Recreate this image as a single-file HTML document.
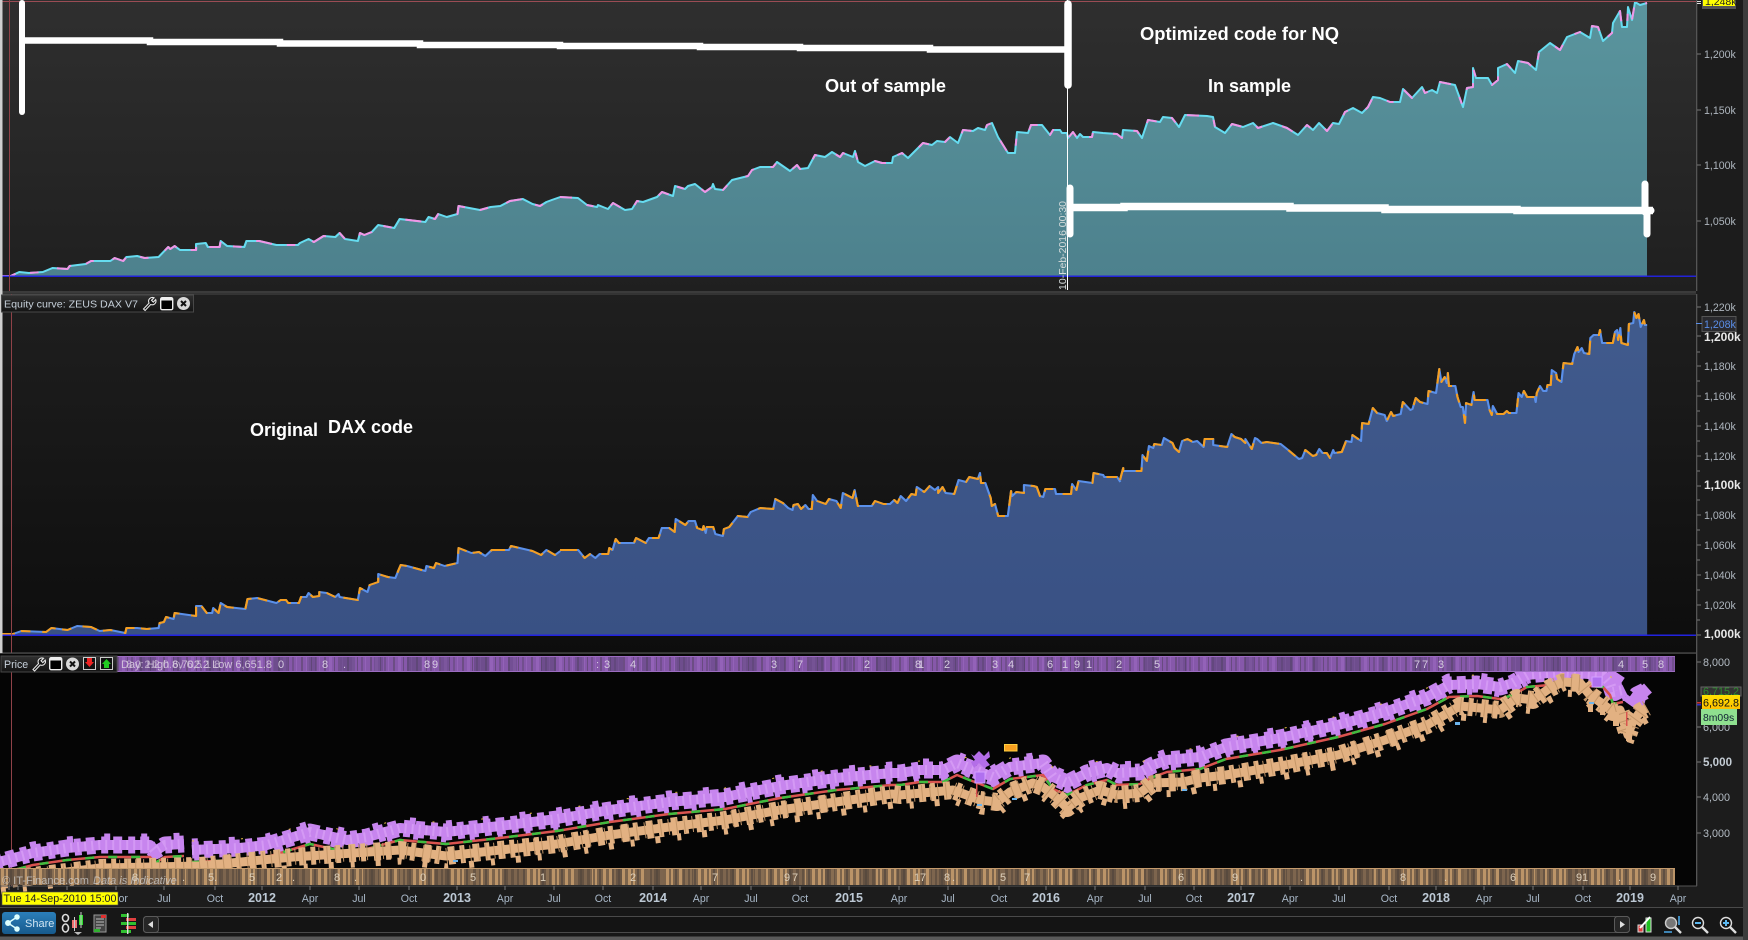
<!DOCTYPE html>
<html><head><meta charset="utf-8"><title>Equity curve</title>
<style>html,body{margin:0;padding:0;background:#1c1c1c;width:1748px;height:940px;overflow:hidden}svg{display:block}text{font-family:"Liberation Sans",Arial,sans-serif}</style></head>
<body>
<svg width="1748" height="940" viewBox="0 0 1748 940" xmlns="http://www.w3.org/2000/svg">
<defs>
<linearGradient id="b1" x1="0" y1="0" x2="0" y2="1"><stop offset="0" stop-color="#2f2f2f"/><stop offset="1" stop-color="#1f1f1f"/></linearGradient>
<linearGradient id="b2" x1="0" y1="0" x2="0" y2="1"><stop offset="0" stop-color="#1f1f1f"/><stop offset="1" stop-color="#0d0d0d"/></linearGradient>
<linearGradient id="f1" gradientUnits="userSpaceOnUse" x1="0" y1="0" x2="0" y2="276"><stop offset="0" stop-color="#5a959e"/><stop offset="1" stop-color="#4d818d"/></linearGradient>
<linearGradient id="f2" gradientUnits="userSpaceOnUse" x1="0" y1="300" x2="0" y2="635"><stop offset="0" stop-color="#415b8d"/><stop offset="1" stop-color="#395184"/></linearGradient>
<linearGradient id="lg" x1="0" y1="0" x2="0" y2="1"><stop offset="0" stop-color="#303030"/><stop offset="1" stop-color="#141414"/></linearGradient>
<linearGradient id="sh" x1="0" y1="0" x2="0" y2="1"><stop offset="0" stop-color="#2b7fba"/><stop offset="1" stop-color="#175a8c"/></linearGradient>
<linearGradient id="yo" x1="0" y1="0" x2="0" y2="1"><stop offset="0" stop-color="#ffe000"/><stop offset="1" stop-color="#ffc000"/></linearGradient>
<pattern id="pp" width="23" height="20" patternUnits="userSpaceOnUse"><rect width="23" height="20" fill="#8658aa"/><rect x="2" width="2" height="20" fill="#6c4d84"/><rect x="7" width="3" height="20" fill="#9362b8"/><rect x="12" width="1" height="20" fill="#684a80"/><rect x="16" width="2" height="20" fill="#724f8e"/><rect x="20" width="1" height="20" fill="#9362b8"/></pattern>
<pattern id="pd" width="67" height="20" patternUnits="userSpaceOnUse"><rect x="5" width="15" height="20" fill="#50406a" fill-opacity=".45"/><rect x="39" width="9" height="20" fill="#50406a" fill-opacity=".35"/></pattern>
<pattern id="tp" width="19" height="20" patternUnits="userSpaceOnUse"><rect width="19" height="20" fill="#7c644c"/><rect x="1" width="3" height="20" fill="#bb9468"/><rect x="6" width="2" height="20" fill="#bb9468"/><rect x="10" width="2" height="20" fill="#5f4f42"/><rect x="14" width="3" height="20" fill="#bb9468"/></pattern>
<pattern id="td" width="71" height="20" patternUnits="userSpaceOnUse"><rect x="8" width="16" height="20" fill="#54463c" fill-opacity=".6"/><rect x="44" width="10" height="20" fill="#54463c" fill-opacity=".5"/></pattern>

<path id="c1a" fill="none" d="M0,276 10,276 18,272 27,273 40,272 49,268 63,269 65,266 80,264 85,261 103,261 107,258 115,261 118,257 128,256 135,258 148,257 157,247 159,249 163,246 168,250 183,250 183,244 192,243 194,247 205,247 206,241 212,246 228,247 230,241 242,241 258,245 278,245 280,243 288,239 293,242 302,236 313,237 317,233 322,239 334,241 336,233 340,235 347,232 353,225 368,228 373,219 397,222 400,217 406,219 409,214 417,217 427,214 428,206 448,210 458,207 467,206 476,201 488,199 497,204 504,206 510,202 515,200 523,197"/>
<path id="c1b" fill="none" d="M560,197 578,198 587,205 597,207 598,205 608,209 613,203 625,210 632,209 637,201 643,202 657,197 662,192 673,196 675,186 685,189 688,186 695,184 705,192 712,187 713,184 715,189 723,190 732,180 748,176 752,170 760,167 773,167 777,162 790,171 797,165 800,169 808,168 815,155 825,157 832,152 840,157 843,153 853,157 855,151 858,162 865,166 875,161 882,163 892,163 893,157 902,153 908,158 923,143 932,145 937,141 945,142 950,137 958,143 963,130 973,131 978,128 985,130 987,125 992,123 998,137 1008,153 1015,153 1017,132 1028,133 1031,125 1042,125 1050,135 1053,130 1060,130 1062,133 1067,133 1068,138 1073,132 1077,138 1080,134 1083,137 1092,137 1093,132 1103,133 1117,134 1122,138 1123,130 1137,131 1142,138 1148,120 1160,122 1163,117 1172,118 1179,127 1185,115 1207,116 1213,117 1215,127 1225,133 1232,124 1243,127 1253,123 1258,128 1273,123 1287,128 1298,135 1307,125 1313,130 1319,123 1327,131 1333,123 1339,124 1345,112 1353,108 1362,113 1368,107 1373,97 1380,98 1390,102 1400,102 1403,89 1412,98 1422,87 1425,93 1432,90 1437,93 1440,82 1455,85 1463,107 1467,88 1473,87 1473,68 1476,78 1488,78 1492,85 1498,80 1498,68 1507,64 1515,73 1518,61 1528,63 1536,70 1539,52 1550,43 1560,50 1567,37 1580,32 1590,38 1592,26 1598,27 1603,41 1612,33 1613,23 1620,11 1622,27 1627,27 1628,7 1632,20 1635,2 1640,5 1647,3"/>
<path id="c2a" fill="none" d="M0,634 12,634 20,631 43,632 48,628 63,630 72,626 85,627 93,631 103,630 117,633 118,628 128,628 137,629 148,628 149,623 153,622 155,617 162,619 163,613 183,616 183,606 188,606 193,613 198,613 199,608 204,613 206,603 212,607 229,609 231,599 240,598 258,603 262,600 267,600 269,603 279,603 281,597 286,597 288,593 292,597 298,596 298,592 305,593 313,597 316,594 317,597 334,600 336,588 343,592 345,585 353,582 353,574 362,577 369,578 372,570 374,565 380,566 397,571 398,566 405,568 407,563 415,566 427,563 428,548 440,553 447,552 453,556 459,550 475,550 477,546 497,551 505,555 510,550 518,555 523,551"/>
<path id="c2b" fill="none" d="M560,550 577,550 583,558 588,554 593,558 597,554 605,554 606,548 609,550 612,539 615,543 629,543 631,538 640,543 643,538 652,538 655,528 662,528 667,532 668,519 677,525 680,521 686,521 688,528 693,530 694,526 696,533 697,527 703,527 705,534 712,536 713,529 718,527 726,516 735,517 738,512 747,508 759,509 761,499 768,503 773,508 777,510 778,505 782,504 785,509 789,505 792,509 795,509 796,495 800,501 808,504 811,499 818,501 822,508 824,493 833,498 835,490 838,506 851,506 854,501 862,504 868,504 872,500 875,503 878,496 883,501 888,494 892,495 893,487 900,492 905,486 910,490 913,487 913,493 917,487 920,493 928,494 932,480 939,482 942,477 950,479 952,473 953,483 957,483 962,498 963,506 966,504 969,516 978,516 981,491 982,496 986,492 993,493 993,485 1002,486 1005,487 1008,496 1011,497 1013,489 1022,489 1023,494 1037,494 1038,484 1042,490 1044,481 1057,483 1058,473 1067,475 1068,477 1080,477 1083,482"/>
<path id="c2c" fill="none" d="M1120,480 1123,468 1123,471 1140,471 1141,455 1145,461 1147,446 1151,448 1152,444 1159,445 1161,438 1169,443 1171,448 1175,452 1178,441 1183,439 1188,442 1192,441 1198,447 1199,439 1207,439 1207,445 1220,447 1224,434 1227,437 1233,439 1237,443 1237,439 1243,449 1246,438 1248,439 1252,443 1257,442 1270,444 1277,450 1287,459 1290,458 1293,450 1300,456 1303,455 1306,449 1309,453 1313,453 1316,458 1319,450 1320,453 1327,452 1331,441 1336,442 1337,435 1345,441 1346,423 1352,424 1356,408 1360,413 1367,415 1369,421 1373,412 1375,416 1382,414 1384,402 1391,410 1393,409 1396,398 1400,402 1407,404 1408,391 1415,393 1418,369 1420,382 1423,377 1425,383 1426,373 1427,386 1433,386 1435,397 1438,407 1440,407 1442,423 1443,403 1448,405 1450,392 1451,400 1463,400 1465,410 1467,415 1468,406 1472,414 1478,414 1481,411 1483,413 1490,413 1492,393 1495,397 1497,391 1500,397 1507,397 1508,402 1509,393 1512,386 1515,391 1518,391 1519,385 1522,385 1523,370 1527,373 1528,379 1532,382 1534,363 1542,364 1544,354 1547,347 1548,352 1551,348 1553,353 1558,354 1559,338 1562,335 1567,335 1568,330 1570,343 1580,343 1582,332 1584,330 1585,340 1587,328 1588,343 1594,345 1595,324 1599,323 1600,312 1602,318 1604,314 1606,327 1609,320 1610,325 1612,325"/>

<path id="pu1" fill="none" d="M-5,863 33,853 67,848 100,845 150,845 155,851 165,845 184,844"/>
<path id="pu2" fill="none" d="M192,850 240,848 267,845 310,832 347,840 367,837 400,828 446,832 500,826 557,819 610,810 669,802 725,797 780,786 836,778 892,773 900,773 920,770 943,770 957,763 967,767 993,777 1010,767 1043,763 1053,777 1067,783 1087,773 1107,768 1117,773 1140,772 1153,765 1167,760 1200,757 1226,747 1280,738 1338,725 1385,712 1427,697 1449,685 1477,684 1500,687 1513,683 1527,675 1560,672 1603,675 1610,683 1613,692 1623,690"/>
<path id="pu3" fill="none" d="M1630,705 1637,695 1647,690"/>
<path id="ta" fill="none" d="M0,880 100,868 200,866 293,857 400,850 446,856 500,850 557,844 610,835 669,827 725,820 780,810 836,802 892,794 900,795 933,792 953,790 980,800 997,802 1010,792 1033,783 1043,787 1057,798 1067,808 1080,798 1100,790 1117,795 1140,793 1153,783 1183,782 1200,778 1226,775 1280,766 1338,755 1385,740 1427,725 1460,706 1500,710 1517,698 1533,700 1550,688 1563,682 1580,683 1590,695 1600,702 1613,712 1620,710 1628,735 1632,723 1640,712 1647,708"/>

<g id="wrench"><path d="M1,12.5 L6.6,6.6 A3.8,3.8 0 0 1 11.5,1.3 L9,3.8 L10.8,5.6 L13.2,3.1 A3.8,3.8 0 0 1 8.2,8 L2.6,14 Z" fill="#111" stroke="#e8e8e8" stroke-width="1.1"/></g>
<g id="win"><rect x=".7" y=".7" width="12" height="12" rx="1.5" fill="#000" stroke="#eee" stroke-width="1.4"/><rect x="1" y="1" width="11.5" height="2.5" fill="#eee"/></g>
<g id="cls"><circle cx="6.5" cy="6.5" r="6.5" fill="#d8d8d8"/><path d="M4,4 L9,9 M9,4 L4,9" stroke="#111" stroke-width="2"/></g>
</defs>

<!-- panel 1 -->
<rect x="0" y="0" width="1696" height="291" fill="url(#b1)"/>
<g><path d="M0,276 10,276 18,272 27,273 40,272 49,268 63,269 65,266 80,264 85,261 103,261 107,258 115,261 118,257 128,256 135,258 148,257 157,247 159,249 163,246 168,250 183,250 183,244 192,243 194,247 205,247 206,241 212,246 228,247 230,241 242,241 258,245 278,245 280,243 288,239 293,242 302,236 313,237 317,233 322,239 334,241 336,233 340,235 347,232 353,225 368,228 373,219 397,222 400,217 406,219 409,214 417,217 427,214 428,206 448,210 458,207 467,206 476,201 488,199 497,204 504,206 510,202 515,200 523,197 523,276Z" fill="url(#f1)" transform="scale(1.0714 1)"/>
<path d="M560,197 578,198 587,205 597,207 598,205 608,209 613,203 625,210 632,209 637,201 643,202 657,197 662,192 673,196 675,186 685,189 688,186 695,184 705,192 712,187 713,184 715,189 723,190 732,180 748,176 752,170 760,167 773,167 777,162 790,171 797,165 800,169 808,168 815,155 825,157 832,152 840,157 843,153 853,157 855,151 858,162 865,166 875,161 882,163 892,163 893,157 902,153 908,158 923,143 932,145 937,141 945,142 950,137 958,143 963,130 973,131 978,128 985,130 987,125 992,123 998,137 1008,153 1015,153 1017,132 1028,133 1031,125 1042,125 1050,135 1053,130 1060,130 1062,133 1067,133 1068,138 1073,132 1077,138 1080,134 1083,137 1092,137 1093,132 1103,133 1117,134 1122,138 1123,130 1137,131 1142,138 1148,120 1160,122 1163,117 1172,118 1179,127 1185,115 1207,116 1213,117 1215,127 1225,133 1232,124 1243,127 1253,123 1258,128 1273,123 1287,128 1298,135 1307,125 1313,130 1319,123 1327,131 1333,123 1339,124 1345,112 1353,108 1362,113 1368,107 1373,97 1380,98 1390,102 1400,102 1403,89 1412,98 1422,87 1425,93 1432,90 1437,93 1440,82 1455,85 1463,107 1467,88 1473,87 1473,68 1476,78 1488,78 1492,85 1498,80 1498,68 1507,64 1515,73 1518,61 1528,63 1536,70 1539,52 1550,43 1560,50 1567,37 1580,32 1590,38 1592,26 1598,27 1603,41 1612,33 1613,23 1620,11 1622,27 1627,27 1628,7 1632,20 1635,2 1640,5 1647,3 1647,276 560,276Z" fill="url(#f1)"/></g>
<g stroke-width="2" stroke-linejoin="round">
<use href="#c1a" stroke="#66dcf0" transform="scale(1.0714 1)"/><use href="#c1a" stroke="#f195e6" stroke-dasharray="15 14 8 18" transform="scale(1.0714 1)"/>
<use href="#c1b" stroke="#66dcf0"/><use href="#c1b" stroke="#f195e6" stroke-dasharray="12 17 7 21"/>
</g>
<rect x="0" y="275.5" width="1696" height="1.5" fill="#2222d8"/>
<rect x="0" y="1" width="1696" height="1" fill="#9a4c54"/>
<rect x="9" y="0" width="1" height="291" fill="#8f4248"/>
<rect x="1067" y="0" width="1" height="290" fill="#fff"/>
<text transform="translate(1066 290) rotate(-90)" font-size="10.5" fill="#d6dcdc" textLength="89" lengthAdjust="spacingAndGlyphs">10-Feb-2016 00:30</text>
<rect x="0" y="291.5" width="1696" height="1" fill="#5a5a5a"/>

<!-- panel 2 -->
<rect x="0" y="294" width="1696" height="359" fill="url(#b2)"/>
<rect x="0" y="293.5" width="1696" height="1" fill="#4a4a4a"/>
<path d="M0,635 0,634 12,634 20,631 43,632 48,628 63,630 72,626 85,627 93,631 103,630 117,633 118,628 128,628 137,629 148,628 149,623 153,622 155,617 162,619 163,613 183,616 183,606 188,606 193,613 198,613 199,608 204,613 206,603 212,607 229,609 231,599 240,598 258,603 262,600 267,600 269,603 279,603 281,597 286,597 288,593 292,597 298,596 298,592 305,593 313,597 316,594 317,597 334,600 336,588 343,592 345,585 353,582 353,574 362,577 369,578 372,570 374,565 380,566 397,571 398,566 405,568 407,563 415,566 427,563 428,548 440,553 447,552 453,556 459,550 475,550 477,546 497,551 505,555 510,550 518,555 523,551 523,635Z" fill="url(#f2)" transform="scale(1.0714 1)"/>
<path d="M560,635 560,550 577,550 583,558 588,554 593,558 597,554 605,554 606,548 609,550 612,539 615,543 629,543 631,538 640,543 643,538 652,538 655,528 662,528 667,532 668,519 677,525 680,521 686,521 688,528 693,530 694,526 696,533 697,527 703,527 705,534 712,536 713,529 718,527 726,516 735,517 738,512 747,508 759,509 761,499 768,503 773,508 777,510 778,505 782,504 785,509 789,505 792,509 795,509 796,495 800,501 808,504 811,499 818,501 822,508 824,493 833,498 835,490 838,506 851,506 854,501 862,504 868,504 872,500 875,503 878,496 883,501 888,494 892,495 893,487 900,492 905,486 910,490 913,487 913,493 917,487 920,493 928,494 932,480 939,482 942,477 950,479 952,473 953,483 957,483 962,498 963,506 966,504 969,516 978,516 981,491 982,496 986,492 993,493 993,485 1002,486 1005,487 1008,496 1011,497 1013,489 1022,489 1023,494 1037,494 1038,484 1042,490 1044,481 1057,483 1058,473 1067,475 1068,477 1080,477 1083,482 1083,635Z" fill="url(#f2)" transform="translate(560 0) scale(1.0714 1) translate(-560 0)"/>
<path d="M1120,635 1120,480 1123,468 1123,471 1140,471 1141,455 1145,461 1147,446 1151,448 1152,444 1159,445 1161,438 1169,443 1171,448 1175,452 1178,441 1183,439 1188,442 1192,441 1198,447 1199,439 1207,439 1207,445 1220,447 1224,434 1227,437 1233,439 1237,443 1237,439 1243,449 1246,438 1248,439 1252,443 1257,442 1270,444 1277,450 1287,459 1290,458 1293,450 1300,456 1303,455 1306,449 1309,453 1313,453 1316,458 1319,450 1320,453 1327,452 1331,441 1336,442 1337,435 1345,441 1346,423 1352,424 1356,408 1360,413 1367,415 1369,421 1373,412 1375,416 1382,414 1384,402 1391,410 1393,409 1396,398 1400,402 1407,404 1408,391 1415,393 1418,369 1420,382 1423,377 1425,383 1426,373 1427,386 1433,386 1435,397 1438,407 1440,407 1442,423 1443,403 1448,405 1450,392 1451,400 1463,400 1465,410 1467,415 1468,406 1472,414 1478,414 1481,411 1483,413 1490,413 1492,393 1495,397 1497,391 1500,397 1507,397 1508,402 1509,393 1512,386 1515,391 1518,391 1519,385 1522,385 1523,370 1527,373 1528,379 1532,382 1534,363 1542,364 1544,354 1547,347 1548,352 1551,348 1553,353 1558,354 1559,338 1562,335 1567,335 1568,330 1570,343 1580,343 1582,332 1584,330 1585,340 1587,328 1588,343 1594,345 1595,324 1599,323 1600,312 1602,318 1604,314 1606,327 1609,320 1610,325 1612,325 1612,635Z" fill="url(#f2)" transform="translate(1120 0) scale(1.0714 1) translate(-1120 0)"/>
<g stroke-width="2" stroke-linejoin="round">
<use href="#c2a" stroke="#5a90ea" transform="scale(1.0714 1)"/><use href="#c2a" stroke="#f59e20" stroke-dasharray="14 6 9 11"  transform="scale(1.0714 1)"/>
<g transform="translate(560 0) scale(1.0714 1) translate(-560 0)"><use href="#c2b" stroke="#5a90ea"/><use href="#c2b" stroke="#f59e20" stroke-dasharray="16 8 10 13"/></g>
<g transform="translate(1120 0) scale(1.0714 1) translate(-1120 0)"><use href="#c2c" stroke="#5a90ea"/><use href="#c2c" stroke="#f59e20" stroke-dasharray="16 11 9 14"/></g>
</g>
<rect x="0" y="634.5" width="1696" height="1.5" fill="#2222e0"/>
<rect x="11" y="294" width="1" height="359" fill="#8f4248"/>
<rect x="0" y="652.5" width="1696" height="1" fill="#5a5a5a"/>

<!-- left strip -->
<rect x="0" y="0" width="2.5" height="653" fill="#cfcfcf"/>

<!-- panel 3 -->
<rect x="0" y="654" width="1696" height="232" fill="#050505"/>
<rect x="11" y="672" width="1" height="214" fill="#8f4248"/>
<g stroke-linejoin="round" fill="none">
<g stroke="#c785ee" stroke-width="10"><use href="#pu1"/><use href="#pu2"/><use href="#pu3"/></g>
<g stroke="#c785ee" stroke-width="17" stroke-dasharray="7 5 9 6"><use href="#pu1"/><use href="#pu2"/><use href="#pu3"/></g>
<g stroke="#c785ee" stroke-width="13" stroke-dasharray="5 23" transform="translate(2 4)"><use href="#pu2"/></g>
<g stroke="#c785ee" stroke-width="13" stroke-dasharray="6 31" transform="translate(0 -5)"><use href="#pu1"/><use href="#pu2"/></g>
<path d="M1605,678 1615,695 1625,690M1632,706 1640,695 1648,688" stroke="#c785ee" stroke-width="12"/>
<path d="M1610,674 1622,682M1637,700 1645,702" stroke="#c785ee" stroke-width="10"/>
<g stroke="#dca6f8" stroke-width="10" stroke-dasharray="2 5" opacity=".6"><use href="#pu1"/><use href="#pu2"/></g>
<g stroke="#e8c040" stroke-width="1" transform="translate(0 -9)" stroke-dasharray="2 47"><use href="#pu2"/></g>
<g transform="translate(0 12)"><use href="#pu1" stroke="#d9534f" stroke-width="2.5"/><use href="#pu2" stroke="#d9534f" stroke-width="2.5"/><use href="#pu1" stroke="#3ebc3e" stroke-width="2.5" stroke-dasharray="9 14"/><use href="#pu2" stroke="#3ebc3e" stroke-width="2.5" stroke-dasharray="9 14"/></g>
<use href="#ta" stroke="#e2b182" stroke-width="9"/>
<use href="#ta" stroke="#e2b182" stroke-width="18" stroke-dasharray="7 5 5 8"/>
<use href="#ta" stroke="#e2b182" stroke-width="7" stroke-dasharray="5 17 4 21" transform="translate(1 11)"/>
<use href="#ta" stroke="#c49668" stroke-width="16" stroke-dasharray="1 7"/>
</g>
<g fill="#e2b182"><rect x="1626" y="722" width="6" height="19"/><rect x="1613" y="712" width="6" height="14"/><rect x="1588" y="700" width="5" height="12"/><rect x="1600" y="705" width="5" height="10"/><rect x="1064" y="806" width="5" height="9"/><rect x="995" y="800" width="5" height="10"/></g>
<g fill="#d9534f"><rect x="1626" y="712" width="1.5" height="14"/><rect x="976" y="783" width="1.5" height="14"/></g>
<g fill="#6db4ec"><rect x="1455" y="722" width="5" height="3"/><rect x="1589" y="702" width="5" height="2"/><rect x="1012" y="798" width="5" height="2"/><rect x="977" y="804" width="5" height="2"/><rect x="1182" y="789" width="5" height="2"/><rect x="453" y="860" width="5" height="2"/></g>
<rect x="1004.5" y="744.5" width="12.5" height="6.5" fill="#f8a020" stroke="#ffd040"/>
<path d="M974,756 979,751 984,756 989,751 990,757 986,760 990,765 984,768 979,763 974,768 971,762 975,760 971,754Z" fill="#b46ee8"/>
<rect x="975" y="772" width="10" height="11" fill="#b070f0" stroke="#d4a0ff"/>
<rect x="1592" y="677" width="10" height="10" fill="#b070f0" stroke="#d4a0ff"/>

<!-- top band -->
<rect x="117" y="656" width="1558" height="16" fill="url(#pp)"/>
<rect x="117" y="656" width="1558" height="16" fill="url(#pd)"/>
<rect x="117" y="656" width="1558" height="1" fill="#9b6cc0"/>
<rect x="117" y="671" width="1558" height="1" fill="#9b6cc0"/>
<text y="668" font-size="11" fill="#d6cce0" x="278 322 343 424 432 596 604 630 771 797 864 915 918 944 992 1008 1047 1062 1074 1086 1116 1139 1154 1414 1422 1438 1618 1642 1658">08.89:343728123461912 5773458</text>

<!-- tan band -->
<rect x="0" y="868" width="1675" height="17" fill="url(#tp)"/>
<rect x="0" y="868" width="1675" height="17" fill="url(#td)"/>
<rect x="0" y="868" width="1675" height="1" fill="#c49a6c"/>
<text y="881" font-size="11" fill="#dccfba" x="132 182 208 214 249 276 292 334 354 420 470 540 630 712 784 792 914 920 944 952 1000 1024 1178 1232 1300 1400 1444 1510 1576 1582 1618 1650">8.5.52.8.0512797178.5769.8.691.9</text>
<text x="2" y="884" font-size="11" fill="#d0d0d0" fill-opacity=".75">© IT-Finance.com</text>
<text x="93" y="884" font-size="11" font-style="italic" fill="#d0d0d0" fill-opacity=".75">Data is Indicative</text>

<!-- right axis -->
<rect x="1696" y="0" width="1.3" height="291" fill="#555"/>
<rect x="1696" y="294" width="1.3" height="360" fill="#555"/>
<rect x="1696" y="654" width="1.3" height="232" fill="#555"/>
<rect x="0" y="885.5" width="1697" height="1" fill="#555"/>
<g stroke="#777" stroke-width="1">
<path d="M1697,54H1701M1697,110H1701M1697,165H1701M1697,221H1701M1697,307H1701M1697,336H1701M1697,352H1700M1697,366H1701M1697,381H1700M1697,396H1701M1697,411H1700M1697,426H1701M1697,441H1700M1697,456H1701M1697,471H1700M1697,486H1701M1697,500H1700M1697,515H1701M1697,530H1700M1697,545H1701M1697,560H1700M1697,575H1701M1697,590H1700M1697,605H1701M1697,620H1700M1697,635H1701M1697,662H1701M1697,727H1701M1697,762H1701M1697,797H1701M1697,833H1701"/>
<path d="M9,886V890M18,886V890M67,886V890M116,886V890M164,886V890M215,886V890M262,886V890M310,886V890M359,886V890M409,886V890M457,886V890M505,886V890M554,886V890M603,886V890M653,886V890M701,886V890M751,886V890M800,886V890M849,886V890M899,886V890M948,886V890M999,886V890M1046,886V890M1095,886V890M1145,886V890M1194,886V890M1241,886V890M1290,886V890M1339,886V890M1389,886V890M1436,886V890M1484,886V890M1533,886V890M1583,886V890M1630,886V890M1678,886V890"/>
</g>
<g font-size="10.6" fill="#aeb6be">
<text x="1704" y="58">1,200k</text><text x="1704" y="114">1,150k</text><text x="1704" y="169">1,100k</text><text x="1704" y="225">1,050k</text>
<text x="1704" y="311">1,220k</text><text x="1704" y="370">1,180k</text><text x="1704" y="400">1,160k</text><text x="1704" y="430">1,140k</text><text x="1704" y="460">1,120k</text><text x="1704" y="519">1,080k</text><text x="1704" y="549">1,060k</text><text x="1704" y="579">1,040k</text><text x="1704" y="609">1,020k</text>
</g>
<g font-size="12" font-weight="bold" fill="#e8e8e8"><text x="1704" y="341">1,200k</text><text x="1704" y="489">1,100k</text><text x="1704" y="638">1,000k</text></g>
<g font-size="10.8" fill="#b4bcc4"><text x="1703" y="666">8,000</text><text x="1703" y="731">6,000</text><text x="1703" y="801">4,000</text><text x="1703" y="837">3,000</text></g>
<text x="1703" y="766" font-size="11.6" font-weight="bold" fill="#c4ccd4">5,000</text>

<rect x="1702" y="-2" width="34" height="11" fill="#555"/><rect x="1703" y="-2" width="32" height="8" fill="#ffff00"/>
<text x="1705" y="5" font-size="10.5" fill="#222">1,248k</text>
<path d="M1697,1.5H1701M1697,3.5H1701" stroke="#ddd"/>
<rect x="1702" y="316.5" width="34" height="15" fill="#2a2a2e" stroke="#555"/>
<text x="1704" y="328" font-size="10.6" fill="#5a8ee8">1,208k</text>
<rect x="1696" y="323" width="6" height="1" fill="#5a8ee8"/>

<rect x="1701" y="687" width="40" height="9" fill="#333" stroke="#666"/><text x="1703" y="695" font-size="10.8" fill="#2e8b2e">6,715.2</text>
<rect x="1702" y="695" width="38" height="14" fill="url(#yo)"/>
<text x="1703" y="706.5" font-size="10.8" fill="#111">6,692.8</text>
<rect x="1697" y="702" width="4" height="1.5" fill="#c83030"/><rect x="1697" y="704" width="4" height="1.5" fill="#3030c8"/>
<rect x="1701" y="709" width="36" height="16" fill="#8fe08f"/>
<text x="1703" y="721" font-size="10.4" fill="#123">8m09s</text>

<!-- x axis -->
<g font-size="10.6" fill="#a9b8c8" text-anchor="middle">
<text x="164" y="902">Jul</text><text x="215" y="902">Oct</text><text x="310" y="902">Apr</text><text x="359" y="902">Jul</text><text x="409" y="902">Oct</text><text x="505" y="902">Apr</text><text x="554" y="902">Jul</text><text x="603" y="902">Oct</text><text x="701" y="902">Apr</text><text x="751" y="902">Jul</text><text x="800" y="902">Oct</text><text x="899" y="902">Apr</text><text x="948" y="902">Jul</text><text x="999" y="902">Oct</text><text x="1095" y="902">Apr</text><text x="1145" y="902">Jul</text><text x="1194" y="902">Oct</text><text x="1290" y="902">Apr</text><text x="1339" y="902">Jul</text><text x="1389" y="902">Oct</text><text x="1484" y="902">Apr</text><text x="1533" y="902">Jul</text><text x="1583" y="902">Oct</text><text x="1678" y="902">Apr</text>
</g>
<g font-size="12.5" font-weight="bold" fill="#bcc8d4" text-anchor="middle">
<text x="262" y="902">2012</text><text x="457" y="902">2013</text><text x="653" y="902">2014</text><text x="849" y="902">2015</text><text x="1046" y="902">2016</text><text x="1241" y="902">2017</text><text x="1436" y="902">2018</text><text x="1630" y="902">2019</text>
</g>
<rect x="2" y="892" width="116" height="13" fill="#ffff00" stroke="#555" stroke-width=".6"/>
<text x="3.5" y="902" font-size="10.8" fill="#222" textLength="113" lengthAdjust="spacingAndGlyphs">Tue 14-Sep-2010 15:00</text>
<text x="118.5" y="902" font-size="10.6" fill="#a9b8c8">or</text>

<!-- bottom toolbar -->
<rect x="0" y="907" width="1748" height="1" fill="#4a4a4a"/>
<rect x="0" y="908" width="1748" height="29" fill="#171717"/>
<rect x="0" y="936.5" width="1748" height="3.5" fill="#5a5a5a"/>
<rect x="1743" y="0" width="5" height="940" fill="#3c3c3c"/>
<rect x="2" y="912" width="54" height="22" rx="3" fill="url(#sh)"/>
<g stroke="#dff" stroke-width="1.5" fill="#dff"><path d="M17,917 8,923 17,929" fill="none"/><circle cx="17" cy="917" r="2"/><circle cx="8" cy="923" r="2.2"/><circle cx="17" cy="929" r="2"/></g>
<text x="25" y="927" font-size="11" fill="#cfe4f2">Share</text>
<g fill="none" stroke="#ddd" stroke-width="1.6"><ellipse cx="65.5" cy="918" rx="3" ry="3.5"/><ellipse cx="65.5" cy="928" rx="3" ry="4"/></g>
<rect x="72" y="920" width="5" height="8" fill="#f07070"/><rect x="74" y="917" width="1" height="14" fill="#ccc"/><rect x="79" y="915" width="4" height="10" fill="#30e030"/><rect x="80.5" y="912" width="1" height="16" fill="#ccc"/><path d="M74,932H82L78,935Z" fill="#bbb"/>
<rect x="94" y="915" width="12" height="17" fill="#444" stroke="#999"/><path d="M96,919H104M96,922H104M96,925H104M96,928H101" stroke="#bbb"/><rect x="101" y="915" width="5" height="3" fill="#e03030"/><rect x="94" y="929" width="6" height="3" fill="#30b030"/>
<g><rect x="121" y="914" width="8" height="3" fill="#30c030"/><rect x="126" y="918" width="10" height="3" fill="#e04040"/><rect x="121" y="922" width="15" height="3" fill="#30c030"/><rect x="126" y="926" width="10" height="3" fill="#e04040"/><rect x="121" y="930" width="10" height="3" fill="#30c030"/><rect x="127" y="913" width="1.4" height="21" fill="#ddd"/></g>
<rect x="143.5" y="916.5" width="1486" height="16" rx="3" fill="#141414" stroke="#4a4a4a"/>
<rect x="143.5" y="916.5" width="15" height="16" rx="3" fill="#262626" stroke="#5a5a5a"/><path d="M153,921V928L148,924.5Z" fill="#ddd"/>
<rect x="1614.5" y="916.5" width="15" height="16" rx="3" fill="#262626" stroke="#5a5a5a"/><path d="M1620,921V928L1625,924.5Z" fill="#ddd"/>
<rect x="1646" y="918" width="5" height="14" fill="#20c020" stroke="#ddd"/><rect x="1638" y="925" width="5" height="7" fill="#e04040" stroke="#ddd"/><path d="M1640,928 1650,917" stroke="#fff" stroke-width="2"/>
<circle cx="1671" cy="923" r="5.5" fill="#777" stroke="#ccc" stroke-width="1.4"/><path d="M1675,927 1681,933" stroke="#ddd" stroke-width="2.4"/><path d="M1679,916V925M1664,932H1672" stroke="#4ca8e8" stroke-width="1.6"/>
<circle cx="1698" cy="923" r="5.5" fill="#111" stroke="#ddd" stroke-width="1.4"/><path d="M1702,927 1708,933" stroke="#ddd" stroke-width="2.4"/><path d="M1695,923H1701" stroke="#5cb8f0" stroke-width="2"/>
<circle cx="1726" cy="923" r="5.5" fill="#111" stroke="#ddd" stroke-width="1.4"/><path d="M1730,927 1736,933" stroke="#ddd" stroke-width="2.4"/><path d="M1723,923H1729M1726,920V926" stroke="#5cb8f0" stroke-width="2"/>

<!-- legends -->
<rect x="1.5" y="295" width="192" height="17" fill="url(#lg)" stroke="#484848"/>
<text x="4" y="307.5" font-size="10.4" fill="#c6d0da" textLength="134" lengthAdjust="spacingAndGlyphs">Equity curve: ZEUS DAX V7</text>
<use href="#wrench" x="142.5" y="296.5"/><use href="#win" x="160" y="297"/><use href="#cls" x="177" y="297"/>

<rect x="1" y="656" width="116" height="16" fill="url(#lg)" stroke="#484848"/>
<text x="4" y="668" font-size="10.6" fill="#c6d0da">Price</text>
<use href="#wrench" x="32" y="657"/><use href="#win" x="49" y="657"/><use href="#cls" x="66" y="657.5"/>
<rect x="83.5" y="657.5" width="12" height="12" fill="#111" stroke="#ccc"/><path d="M87,658V662H85L89.5,667 94,662H92V658Z" fill="#ee2222"/>
<rect x="100.5" y="657.5" width="12" height="12" fill="#111" stroke="#ccc"/><path d="M104,668V664H102L106.5,659 111,664H109V668Z" fill="#22cc22"/>
<text x="121" y="668" font-size="11" fill="#d8ccdf" fill-opacity=".9">Day: High 6,702.2 Low 6,651.8</text>
<text x="126" y="668" font-size="11" fill="#d8ccdf" fill-opacity=".7">8  0  2.2 0.8v 6,5 1 8</text>

<!-- hand drawn annotations -->
<g fill="none" stroke="#fff" stroke-linecap="round">
<path d="M22,3V112" stroke-width="6"/>
<path d="M1068,4V85" stroke-width="7.5"/>
<path d="M1070,188V234" stroke-width="7"/>
</g>
<g fill="none" stroke="#fff">
<path d="M22,40.5H150V42H280V43.5H420V45H560V46H700V47H800V48H930V49.5H1066" stroke-width="6.5"/>
<path d="M1072,207.5H1124V206.5H1290V208H1385V209.5H1517V210.5H1653" stroke-width="7.5"/>
</g>
<g fill="none" stroke="#fff" stroke-linecap="round"><path d="M1645,184V212" stroke-width="7"/><path d="M1647,212V234" stroke-width="7"/></g>
<circle cx="1651" cy="210.5" r="3.5" fill="#fff"/>

<g font-weight="bold" font-size="18" fill="#fff">
<text x="1140" y="40" textLength="199" lengthAdjust="spacingAndGlyphs">Optimized code for NQ</text>
<text x="1208" y="92" textLength="83" lengthAdjust="spacingAndGlyphs">In sample</text>
<text x="825" y="92" textLength="121" lengthAdjust="spacingAndGlyphs">Out of sample</text>
<text x="250" y="436" textLength="68" lengthAdjust="spacingAndGlyphs">Original</text>
<text x="328" y="433" textLength="85" lengthAdjust="spacingAndGlyphs">DAX code</text>
</g>
</svg>
</body></html>
